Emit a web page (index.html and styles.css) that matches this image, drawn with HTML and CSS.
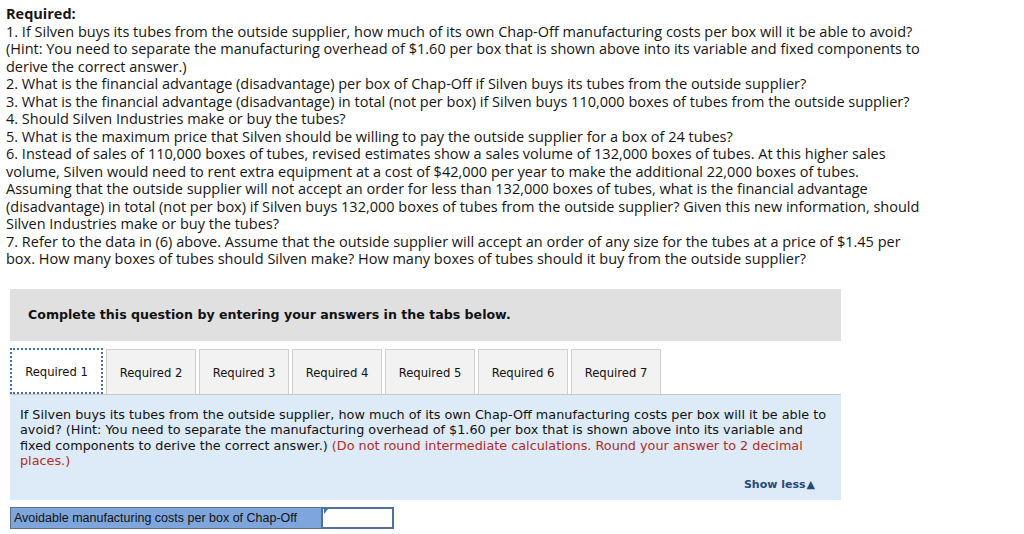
FILE: index.html
```html
<!DOCTYPE html>
<html>
<head>
<meta charset="utf-8">
<link rel="stylesheet" href="styles.css">
</head>
<body>
<div class="page">
  <div class="required">
    <div class="req-title">Required:</div>
    <p>1. If Silven buys its tubes from the outside supplier, how much of its own Chap-Off manufacturing costs per box will it be able to avoid?<br>(Hint: You need to separate the manufacturing overhead of $1.60 per box that is shown above into its variable and fixed components to<br>derive the correct answer.)</p>
    <p>2. What is the financial advantage (disadvantage) per box of Chap-Off if Silven buys its tubes from the outside supplier?</p>
    <p>3. What is the financial advantage (disadvantage) in total (not per box) if Silven buys 110,000 boxes of tubes from the outside supplier?</p>
    <p>4. Should Silven Industries make or buy the tubes?</p>
    <p>5. What is the maximum price that Silven should be willing to pay the outside supplier for a box of 24 tubes?</p>
    <p>6. Instead of sales of 110,000 boxes of tubes, revised estimates show a sales volume of 132,000 boxes of tubes. At this higher sales<br>volume, Silven would need to rent extra equipment at a cost of $42,000 per year to make the additional 22,000 boxes of tubes.<br>Assuming that the outside supplier will not accept an order for less than 132,000 boxes of tubes, what is the financial advantage<br>(disadvantage) in total (not per box) if Silven buys 132,000 boxes of tubes from the outside supplier? Given this new information, should<br>Silven Industries make or buy the tubes?</p>
    <p>7. Refer to the data in (6) above. Assume that the outside supplier will accept an order of any size for the tubes at a price of $1.45 per<br>box. How many boxes of tubes should Silven make? How many boxes of tubes should it buy from the outside supplier?</p>
  </div>

  <div class="question">
    <div class="instruction">Complete this question by entering your answers in the tabs below.</div>
    <div class="tabs">
      <div class="tab active">Required 1</div>
      <div class="tab">Required 2</div>
      <div class="tab">Required 3</div>
      <div class="tab">Required 4</div>
      <div class="tab">Required 5</div>
      <div class="tab">Required 6</div>
      <div class="tab">Required 7</div>
    </div>
    <div class="panel">
      <p class="panel-text">If Silven buys its tubes from the outside supplier, how much of its own Chap-Off manufacturing costs per box will it be able to<br>avoid? (Hint: You need to separate the manufacturing overhead of $1.60 per box that is shown above into its variable and<br>fixed components to derive the correct answer.) <span class="red">(Do not round intermediate calculations. Round your answer to 2 decimal<br>places.)</span></p>
      <div class="show-less">Show less<span class="tri">&#9650;</span></div>
    </div>
    <div class="answer-row">
      <div class="answer-label">Avoidable manufacturing costs per box of Chap-Off</div>
      <div class="answer-input"><span class="marker"></span></div>
    </div>
  </div>
</div>
</body>
</html>
```

FILE: styles.css
```css
html, body {
  margin: 0;
  padding: 0;
  background: #ffffff;
}
.page {
  padding: 5px 0 0 6px;
  width: 1018px;
}
.required {
  font-family: "Open Sans", "Liberation Sans", sans-serif;
  font-size: 14.5px;
  line-height: 17.5px;
  color: #151515;
}
.req-title {
  font-weight: bold;
}
.required p {
  margin: 0;
}
.question {
  margin-top: 21px;
  margin-left: 4px;
  width: 831px;
}
.instruction {
  background: #e0e0e0;
  height: 52px;
  display: flex;
  align-items: center;
  padding-left: 18px;
  font-family: "DejaVu Sans", Verdana, sans-serif;
  font-weight: bold;
  font-size: 12.6px;
  color: #111;
}
.tabs {
  display: flex;
  gap: 3px;
  margin-top: 8px;
  height: 45px;
}
.tab {
  width: 88px;
  height: 45px;
  background: #f2f2f2;
  border: 1px solid #cfcfcf;
  border-bottom: none;
  display: flex;
  align-items: center;
  justify-content: center;
  padding-top: 3px;
  box-sizing: border-box;
  width: 90px;
  font-family: "DejaVu Sans", Verdana, sans-serif;
  font-size: 11.6px;
  color: #111;
}
.tab.active {
  width: 93px;
  height: 46px;
  background: #ffffff;
  border: 2px dotted #3a6fb5;
  margin-top: -1px;
  position: relative;
  z-index: 1;
}
.panel {
  background: #ddebf8;
  border-top: 1px solid #c8c8c8;
  padding: 12px 10px 9px 10px;
  height: 84px;
  display: flex;
  flex-direction: column;
  justify-content: space-between;
}
.panel-text {
  margin: 0;
  font-family: "DejaVu Sans", Verdana, sans-serif;
  font-size: 12.8px;
  line-height: 15.5px;
  color: #111;
}
.red {
  color: #b52a25;
}
.show-less {
  align-self: flex-end;
  margin-right: 16px;
  font-family: "DejaVu Sans", Verdana, sans-serif;
  font-weight: bold;
  font-size: 11px;
  color: #27477d;
}
.tri {
  font-size: 11px;
  margin-left: 1px;
}
.answer-row {
  display: flex;
  margin-top: 7px;
  height: 22px;
}
.answer-label {
  box-sizing: border-box;
  width: 312px;
  background: #7ea6dd;
  border: 1px solid #5f6f88;
  font-family: "Liberation Sans", Arial, sans-serif;
  font-size: 12.5px;
  line-height: 20px;
  padding-left: 3px;
  color: #111;
}
.answer-input {
  width: 72px;
  box-sizing: border-box;
  background: #fff;
  border: 2px solid #4f6fa0;
  border-left-width: 1px;
  position: relative;
}
.marker {
  position: absolute;
  left: 1px;
  top: 0;
  width: 0;
  height: 0;
  border-top: 5px solid #3a6fc0;
  border-right: 4px solid transparent;
}
```
